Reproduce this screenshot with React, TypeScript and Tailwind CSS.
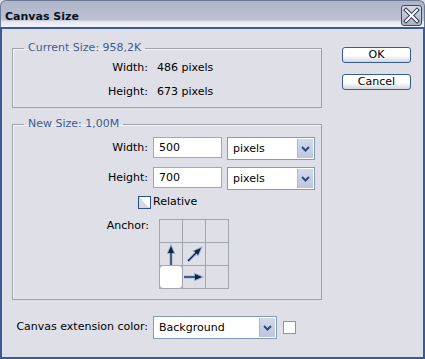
import React from "react";

function CloseButton() {
  return (
    <div className="w-[21px] h-[21px] rounded-[3px] border border-[#3e4a66] bg-[linear-gradient(#d6dbe6,#a9b1c4)] flex items-center justify-center">
      <svg width="17" height="17" viewBox="0 0 17 17">
        <path d="M3 3 L14 14 M14 3 L3 14" stroke="#2e3650" strokeWidth="4" strokeLinecap="square" />
        <path d="M3 3 L14 14 M14 3 L3 14" stroke="#ffffff" strokeWidth="2" strokeLinecap="square" />
      </svg>
    </div>
  );
}

function Chevron() {
  return (
    <div className="w-[16px] h-full bg-[linear-gradient(#d3daea,#bcc6dc)] border-l border-[#aab8d2] flex items-center justify-center">
      <svg width="9" height="6" viewBox="0 0 9 6">
        <path d="M1 1 L4.5 4.5 L8 1" stroke="#2c4a86" strokeWidth="2" fill="none" />
      </svg>
    </div>
  );
}

function Select({ value, w }: { value: string; w: string }) {
  return (
    <div className={`${w} h-[23px] border border-[#7f9db9] bg-white flex items-stretch`}>
      <span className="flex-1 pl-[5px] leading-[21px] text-[11px]">{value}</span>
      <div className="p-[1px]">
        <Chevron />
      </div>
    </div>
  );
}

function Button({ label }: { label: string }) {
  return (
    <button className="w-[69px] h-[16px] rounded-[3px] border border-[#3a5a94] bg-[linear-gradient(#ffffff_55%,#d2d5df)] text-[11px] leading-[14px] text-black">
      {label}
    </button>
  );
}

function Group({ title, className, children }: { title: string; className?: string; children: React.ReactNode }) {
  return (
    <fieldset className={`border border-[#9ea2ad] shadow-[inset_1px_1px_0_#f4f5f8] ${className ?? ""}`}>
      <legend className="ml-[11px] px-[4px] leading-[14px] text-[11px] text-[#3d5c93]">{title}</legend>
      {children}
    </fieldset>
  );
}

function Arrow({ kind }: { kind: "up" | "upright" | "right" }) {
  const d =
    kind === "up"
      ? { line: "M11 22 L11 7", head: "M11 3 L8 10 L14 10 Z" }
      : kind === "upright"
      ? { line: "M5 18 L15 8", head: "M18 5 L11 8 L15 12 Z" }
      : { line: "M1 11 L15 11", head: "M19 11 L12 8 L12 14 Z" };
  return (
    <svg width="22" height="22" viewBox="0 0 22 22">
      <path d={d.line} stroke="#9fb3d8" strokeWidth="3" />
      <path d={d.head} fill="#9fb3d8" stroke="#9fb3d8" strokeWidth="2" />
      <path d={d.line} stroke="#14213f" strokeWidth="1.2" />
      <path d={d.head} fill="#14213f" />
    </svg>
  );
}

function AnchorGrid() {
  const cells: (null | "sel" | "up" | "upright" | "right")[] = [
    null, null, null,
    "up", "upright", null,
    "sel", "right", null,
  ];
  return (
    <div className="grid grid-cols-[repeat(3,23px)] border-l border-t border-[#a2a6b0] w-[70px]">
      {cells.map((c, i) => (
        <div key={i} className="w-[23px] h-[23px] border-r border-b border-[#a2a6b0] flex items-center justify-center">
          {c === "sel" ? (
            <div className="w-[24px] h-[24px] -ml-[1px] -mt-[1px] bg-white rounded-[4px] border border-[#a2a6b0] shrink-0" />
          ) : c ? (
            <Arrow kind={c} />
          ) : null}
        </div>
      ))}
    </div>
  );
}

export default function App() {
  return (
    <div className="w-[425px] h-[359px] flex flex-col bg-[#dedfe7] font-['DejaVu_Sans',sans-serif] text-[11px] text-black overflow-hidden whitespace-nowrap">
      {/* title bar */}
      <div className="h-[27px] shrink-0 rounded-t-[6px] border-t border-x border-[#6d7a96] bg-[linear-gradient(#aeb5c8_0%,#bcc2d2_72%,#e6e8ef_80%,#f2f3f7_100%)] flex items-start justify-between pl-[4px] pr-[2px]">
        <span className="mt-[9px] font-bold text-[11px] leading-[13px] text-[#0c1220]">Canvas Size</span>
        <div className="mt-[4px]">
          <CloseButton />
        </div>
      </div>

      {/* body */}
      <div className="flex-1 border-2 border-[#3c5a94] flex flex-col pl-[10px] pt-[12px]">
        <div className="flex">
          <div className="w-[310px] flex flex-col">
            <Group title="Current Size: 958,2K" className="pt-[6px] pb-[8px]">
              <div className="flex flex-col gap-[10px] leading-[14px]">
                <div className="flex">
                  <span className="w-[135px] text-right">Width:</span>
                  <span className="ml-[9px]">486 pixels</span>
                </div>
                <div className="flex">
                  <span className="w-[135px] text-right">Height:</span>
                  <span className="ml-[9px]">673 pixels</span>
                </div>
              </div>
            </Group>

            <Group title="New Size: 1,00M" className="mt-[9px] pt-[6px] pb-[10px]">
              <div className="flex flex-col">
                <div className="flex items-start">
                  <span className="w-[135px] text-right leading-[21px]">Width:</span>
                  <div className="ml-[5px] w-[69px] h-[21px] border border-[#a3a7b3] bg-white pl-[5px] leading-[19px]">500</div>
                  <div className="ml-[5px]">
                    <Select value="pixels" w="w-[88px]" />
                  </div>
                </div>
                <div className="flex items-start mt-[7px]">
                  <span className="w-[135px] text-right leading-[21px]">Height:</span>
                  <div className="ml-[5px] w-[69px] h-[21px] border border-[#a3a7b3] bg-white pl-[5px] leading-[19px]">700</div>
                  <div className="ml-[5px]">
                    <Select value="pixels" w="w-[88px]" />
                  </div>
                </div>
                <div className="flex items-center mt-[5px] pl-[125px] h-[14px]">
                  <div className="w-[13px] h-[13px] border border-[#2b4f8c] bg-[linear-gradient(45deg,#d5d9e3_50%,#ffffff_50%)]" />
                  <span className="ml-[2px] leading-[14px]">Relative</span>
                </div>
                <div className="flex items-start mt-[10px]">
                  <span className="w-[136px] text-right leading-[14px]">Anchor:</span>
                  <div className="ml-[10px]">
                    <AnchorGrid />
                  </div>
                </div>
              </div>
            </Group>
          </div>

          <div className="ml-[20px] mt-[6px] flex flex-col gap-[11px]">
            <Button label="OK" />
            <Button label="Cancel" />
          </div>
        </div>

        <div className="flex items-center mt-[16px]">
          <span className="w-[136px] text-right">Canvas extension color:</span>
          <div className="ml-[5px]">
            <Select value="Background" w="w-[124px]" />
          </div>
          <div className="ml-[6px] w-[13px] h-[13px] border border-[#7f95b8] bg-white" />
        </div>
      </div>
    </div>
  );
}
